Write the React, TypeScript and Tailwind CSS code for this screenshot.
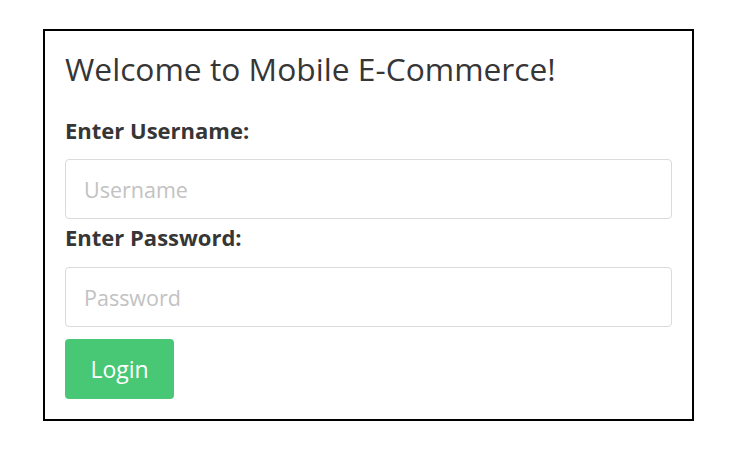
export default function App() {
  return (
    <div className="min-h-[456px] bg-white pt-[29px] pl-[43px]" style={{ fontFamily: '"Open Sans", "Lato", sans-serif' }}>
      <div className="w-[651px] border-2 border-black p-5 flex flex-col">
        <h1 className="text-[31.75px] leading-[36px] text-[#363636]">Welcome to Mobile E-Commerce!</h1>
        <label className="mt-[29px] text-[22px] leading-[28px] font-bold text-[#363636]">Enter Username:</label>
        <input
          className="mt-[15px] h-[60px] w-full rounded-[4px] border border-[#dbdbdb] px-[18px] text-[21.5px] text-[#363636] placeholder:text-[#c2c2c2] outline-none"
          placeholder="Username"
        />
        <label className="mt-[4px] text-[22px] leading-[28px] font-bold text-[#363636]">Enter Password:</label>
        <input
          type="password"
          className="mt-[16px] h-[60px] w-full rounded-[4px] border border-[#dbdbdb] px-[18px] text-[21.5px] text-[#363636] placeholder:text-[#c2c2c2] outline-none"
          placeholder="Password"
        />
        <button className="mt-[12px] h-[60px] w-[109px] rounded-[4px] bg-[#48c774] text-white text-[23px]">Login</button>
      </div>
    </div>
  );
}
